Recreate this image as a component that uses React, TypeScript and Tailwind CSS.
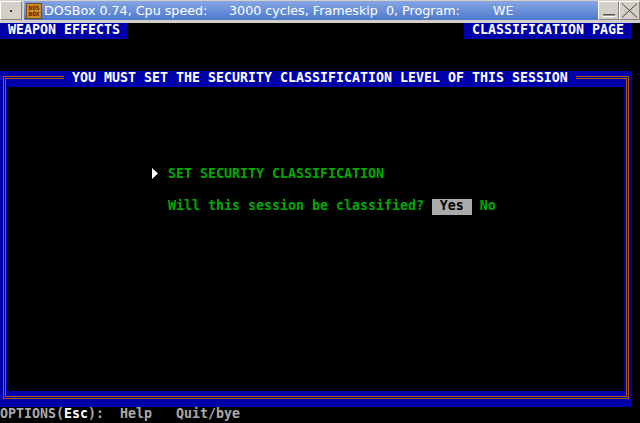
import React from "react";

function TitleBar() {
  return (
    <div className="h-[23px] bg-[#d4d0c8] flex flex-col">
      <div className="h-[20px] flex pt-[1px]">
        {/* system menu button */}
        <div className="w-[22px] h-[19px] border border-t-white border-l-white border-r-[#808080] border-b-[#808080] bg-[#d4d0c8] flex items-center justify-center">
          <div className="w-[2px] h-[2px] bg-[#333]" />
        </div>
        <div className="ml-[2px] w-[574px] h-[19px] bg-linear-to-b from-[#86a6e4] to-[#4d79cd] flex items-center font-[family-name:'DejaVu_Sans',sans-serif] text-[12.7px] text-white whitespace-pre">
          {/* DOSBox logo */}
          <div className="ml-[2px] w-[16px] h-[16px] bg-[#c9922c] border border-[#7a4a10] flex flex-col items-center justify-center leading-[6px] text-[6px] font-bold text-[#5a1400] font-[family-name:'DejaVu_Sans_Mono',monospace]">
            <span>DOS</span>
            <span>BOX</span>
          </div>
          <span className="ml-[2px] w-[185px]">DOSBox 0.74, Cpu speed:</span>
          <span className="w-[264px]">3000 cycles, Frameskip  0, Program:</span>
          <span>WE</span>
        </div>
        {/* minimize */}
        <div className="w-[21px] h-[19px] border border-t-white border-l-white border-r-[#808080] border-b-[#808080] bg-[#d4d0c8] flex items-end justify-center pb-[2px]">
          <div className="w-[12px] h-[3px] border-t border-b border-t-[#555] border-b-white bg-[#999]" />
        </div>
        {/* close */}
        <div className="w-[21px] h-[19px] border border-t-white border-l-white border-r-[#808080] border-b-[#808080] bg-[#d4d0c8] flex items-center justify-center">
          <svg width="17" height="15" viewBox="0 0 17 15">
            <path d="M1 0.5 L16 14.5 M16 0.5 L1 14.5" stroke="#444" strokeWidth="1" fill="none" />
          </svg>
        </div>
      </div>
    </div>
  );
}

function Frame() {
  return (
    <div className="w-[632px] h-[336px] bg-[#0000aa] pl-[3px] pt-[5px] pr-[3px] pb-[8px]">
      <div className="h-full border border-[#aa5500] p-[1px]">
        <div className="h-full border border-[#aa5500] px-[2px] pb-[5px] flex flex-col">
          <div className="h-4 -mt-[8px] ml-[56px] w-[512px] bg-[#0000aa] text-white text-center whitespace-pre">
            YOU MUST SET THE SECURITY CLASSIFICATION LEVEL OF THIS SESSION
          </div>
          <div className="flex-1 bg-black pt-[80px] pl-[144px] flex flex-col">
            <div className="h-4 flex">
              <div className="w-4 h-4 flex items-start">
                <svg width="8" height="16" viewBox="0 0 8 16">
                  <polygon points="0,1 0,12 6,6.5" fill="#ffffff" />
                </svg>
              </div>
              <span className="text-[#00aa00] whitespace-pre">SET SECURITY CLASSIFICATION</span>
            </div>
            <div className="h-4" />
            <div className="h-4 flex pl-4 whitespace-pre text-[#00aa00]">
              <span>Will this session be classified? </span>
              <span className="bg-[#aaaaaa] text-black"> Yes </span>
              <span> No</span>
            </div>
          </div>
        </div>
      </div>
    </div>
  );
}

function Screen() {
  return (
    <div className="h-[400px] bg-black flex flex-col font-[family-name:'DejaVu_Sans_Mono','Liberation_Mono',monospace] font-bold text-[13.29px] leading-[14px]">
      <div className="h-4 flex justify-between">
        <div className="w-[128px] h-4 bg-[#0000aa] text-white whitespace-pre"> WEAPON EFFECTS</div>
        <div className="w-[168px] h-4 mr-[8px] bg-[#0000aa] text-white whitespace-pre"> CLASSIFICATION PAGE</div>
      </div>
      <div className="h-8" />
      <Frame />
      <div className="h-4 text-[#aaaaaa] whitespace-pre">
        OPTIONS(<span className="text-white">Esc</span>):  Help   Quit/bye
      </div>
    </div>
  );
}

export default function App() {
  return (
    <div className="w-[640px] h-[423px] bg-black overflow-hidden">
      <TitleBar />
      <Screen />
    </div>
  );
}
